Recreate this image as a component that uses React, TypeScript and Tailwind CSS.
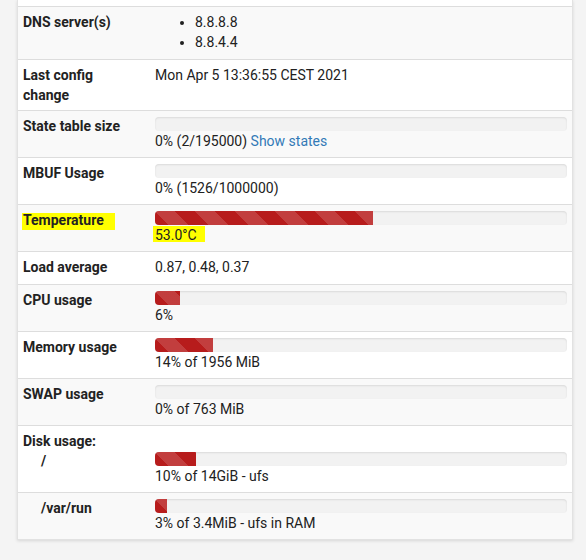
import React from "react";

const stripe =
  "bg-[#b71c1c] bg-[linear-gradient(45deg,rgba(255,255,255,0.15)_25%,transparent_25%,transparent_50%,rgba(255,255,255,0.15)_50%,rgba(255,255,255,0.15)_75%,transparent_75%,transparent)] bg-[length:40px_40px]";

function Bar({ pct }: { pct: number }) {
  return (
    <div className="mt-[1px] h-[14px] w-full overflow-hidden rounded-[4px] bg-[#f2f2f2] shadow-[inset_0_1px_2px_rgba(0,0,0,0.1)]">
      {pct > 0 && <div className={`h-full ${stripe}`} style={{ width: `${pct}%` }} />}
    </div>
  );
}

function Row({
  h,
  striped,
  label,
  children,
}: {
  h: string;
  striped?: boolean;
  label: React.ReactNode;
  children: React.ReactNode;
}) {
  return (
    <div className={`flex border-t border-[#dddddd] ${h} ${striped ? "bg-[#f9f9f9]" : "bg-white"}`}>
      <div className="w-[132px] shrink-0 px-[5px] pt-[5px] font-bold text-[#222222]">{label}</div>
      <div className="min-w-0 flex-1 pl-[5px] pr-[5px] pt-[5px]">{children}</div>
    </div>
  );
}

export default function App() {
  return (
    <div
      className="min-h-[560px] w-[586px] bg-[#f4f4f4] pl-[17px] text-[14px] leading-[20px] text-[#212121]"
      style={{ fontFamily: "Roboto, 'Liberation Sans', sans-serif" }}
    >
      <div className="w-[556px] border-x border-b border-[#e2e2e2] bg-white shadow-[0_1px_3px_rgba(0,0,0,0.12)]">
        <div className="h-[6px] bg-white" />
        <Row h="h-[53px]" striped label="DNS server(s)">
          <ul className="list-disc pl-[40px]">
            <li>8.8.8.8</li>
            <li>8.8.4.4</li>
          </ul>
        </Row>
        <Row
          h="h-[51px]"
          label={
            <>
              Last config
              <br />
              change
            </>
          }
        >
          Mon Apr 5 13:36:55 CEST 2021
        </Row>
        <Row h="h-[47px]" striped label="State table size">
          <Bar pct={0} />
          <div>
            0% (2/195000) <a className="text-[#337ab7]">Show states</a>
          </div>
        </Row>
        <Row h="h-[47px]" label="MBUF Usage">
          <Bar pct={0} />
          <div>0% (1526/1000000)</div>
        </Row>
        <Row
          h="h-[47px]"
          striped
          label={
            <span className="relative inline-block">
              <span className="absolute left-[-1px] top-[3px] h-[17px] w-[93px] bg-[#ffff00]" />
              <span className="relative">Temperature</span>
            </span>
          }
        >
          <Bar pct={53} />
          <div>
            <span className="relative inline-block">
              <span className="absolute left-[-2px] top-[1px] h-[16px] w-[52px] bg-[#ffff00]" />
              <span className="relative">53.0°C</span>
            </span>
          </div>
        </Row>
        <Row h="h-[33px]" label="Load average">
          0.87, 0.48, 0.37
        </Row>
        <Row h="h-[47px]" striped label="CPU usage">
          <Bar pct={6} />
          <div>6%</div>
        </Row>
        <Row h="h-[47px]" label="Memory usage">
          <Bar pct={14} />
          <div>14% of 1956 MiB</div>
        </Row>
        <Row h="h-[47px]" striped label="SWAP usage">
          <Bar pct={0} />
          <div>0% of 763 MiB</div>
        </Row>
        <Row
          h="h-[67px]"
          label={
            <>
              <div>Disk usage:</div>
              <div className="pl-[18px]">/</div>
            </>
          }
        >
          <div className="h-[20px]" />
          <Bar pct={10} />
          <div>10% of 14GiB - ufs</div>
        </Row>
        <Row h="h-[47px]" striped label={<div className="pl-[18px]">/var/run</div>}>
          <Bar pct={3} />
          <div>3% of 3.4MiB - ufs in RAM</div>
        </Row>
      </div>
    </div>
  );
}
